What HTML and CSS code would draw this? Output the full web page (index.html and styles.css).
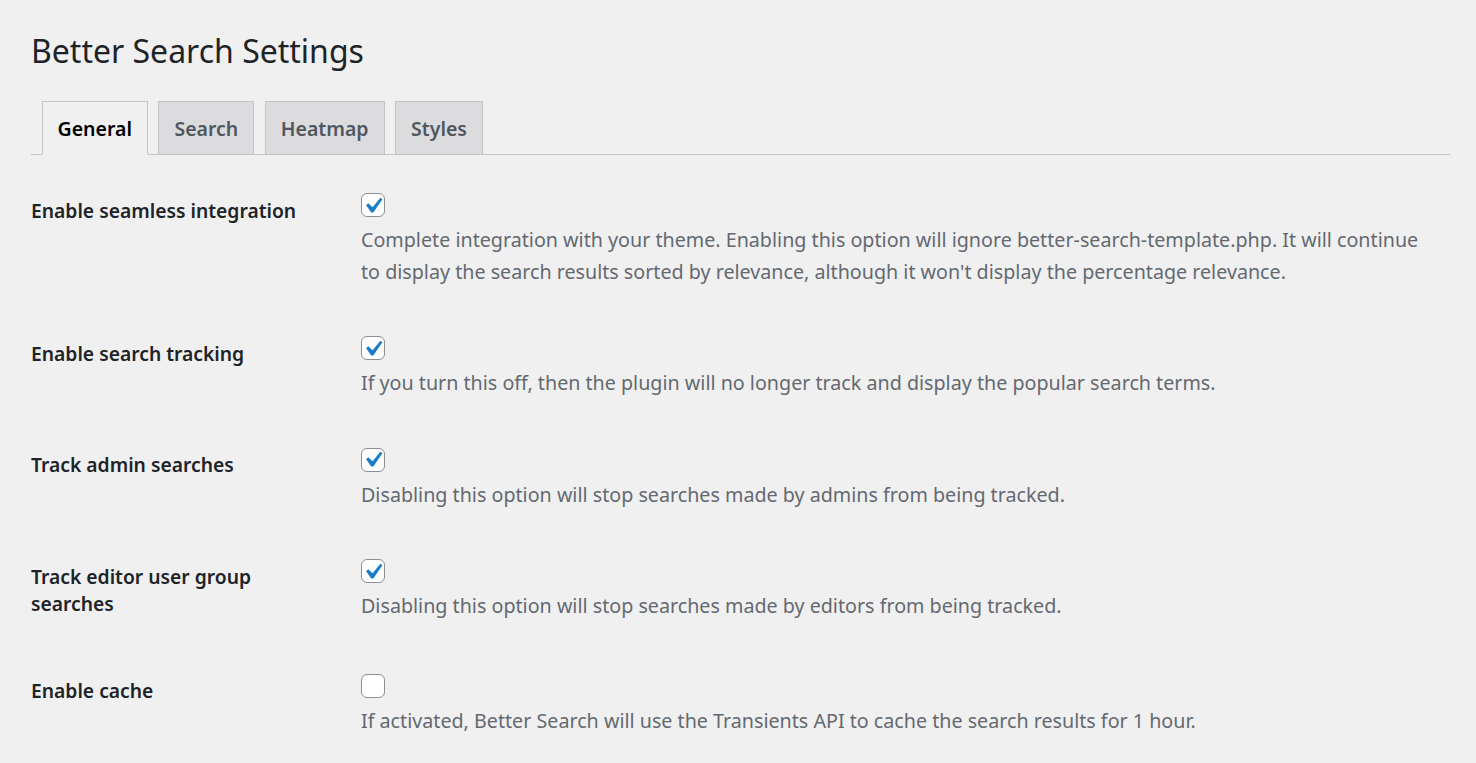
FILE: index.html
```html
<!DOCTYPE html>
<html lang="en">
<head>
    <meta charset="UTF-8">
    <meta name="viewport" content="width=device-width, initial-scale=1.0">
    <title>Better Search Settings</title>
    <link rel="stylesheet" href="styles.css">
</head>
<body>
    <div class="wrap">
        <h1>Better Search Settings</h1>

        <nav class="nav-tab-wrapper">
            <a class="nav-tab nav-tab-active" href="#general">General</a>
            <a class="nav-tab" href="#search">Search</a>
            <a class="nav-tab" href="#heatmap">Heatmap</a>
            <a class="nav-tab" href="#styles">Styles</a>
        </nav>

        <table class="form-table">
            <tbody>
                <tr>
                    <th>Enable seamless integration</th>
                    <td>
                        <span class="checkbox checked"><svg viewBox="0 0 20 20"><path d="M14.83 4.89l1.34.94-5.81 8.38H9.02L5.78 9.67l1.34-1.25 2.78 2.59z"/></svg></span>
                        <p class="description">Complete integration with your theme. Enabling this option will ignore better-search-template.php. It will continue to display the search results sorted by relevance, although it won't display the percentage relevance.</p>
                    </td>
                </tr>
                <tr>
                    <th>Enable search tracking</th>
                    <td>
                        <span class="checkbox checked"><svg viewBox="0 0 20 20"><path d="M14.83 4.89l1.34.94-5.81 8.38H9.02L5.78 9.67l1.34-1.25 2.78 2.59z"/></svg></span>
                        <p class="description">If you turn this off, then the plugin will no longer track and display the popular search terms.</p>
                    </td>
                </tr>
                <tr>
                    <th>Track admin searches</th>
                    <td>
                        <span class="checkbox checked"><svg viewBox="0 0 20 20"><path d="M14.83 4.89l1.34.94-5.81 8.38H9.02L5.78 9.67l1.34-1.25 2.78 2.59z"/></svg></span>
                        <p class="description">Disabling this option will stop searches made by admins from being tracked.</p>
                    </td>
                </tr>
                <tr>
                    <th>Track editor user group searches</th>
                    <td>
                        <span class="checkbox checked"><svg viewBox="0 0 20 20"><path d="M14.83 4.89l1.34.94-5.81 8.38H9.02L5.78 9.67l1.34-1.25 2.78 2.59z"/></svg></span>
                        <p class="description">Disabling this option will stop searches made by editors from being tracked.</p>
                    </td>
                </tr>
                <tr>
                    <th>Enable cache</th>
                    <td>
                        <span class="checkbox"></span>
                        <p class="description">If activated, Better Search will use the Transients API to cache the search results for 1 hour.</p>
                    </td>
                </tr>
            </tbody>
        </table>
    </div>
</body>
</html>
```

FILE: styles.css
```css
html, body {
    margin: 0;
    padding: 0;
    background: #f0f0f1;
}
body {
    font-family: "Noto Sans", "Open Sans", sans-serif;
    font-size: 19.7px;
    color: #3c434a;
    line-height: 31.5px;
}
.wrap {
    padding: 14px 26px 0 31px;
}
h1 {
    font-size: 32px;
    font-weight: 400;
    line-height: 45px;
    margin: 0;
    padding: 13.5px 0 6px;
    color: #1d2327;
}
.nav-tab-wrapper {
    margin-top: 22.5px;
    border-bottom: 1px solid #c3c4c7;
    display: flex;
    padding-left: 10.5px;
    gap: 10.5px;
}
.nav-tab {
    display: block;
    padding: 7.5px 15px;
    font-size: 19.5px;
    font-weight: 600;
    line-height: 37px;
    color: #50575e;
    text-decoration: none;
    background: #dcdcde;
    border: 1px solid #c3c4c7;
    border-bottom: none;
}
.nav-tab-active {
    background: #f0f0f1;
    color: #000;
    border-bottom: 1px solid #f0f0f1;
    margin-bottom: -1px;
}
.form-table {
    border-collapse: collapse;
    width: 100%;
    margin-top: 11.5px;
}
.form-table th {
    width: 300px;
    padding: 30px 15px 30px 0;
    text-align: left;
    vertical-align: top;
    font-size: 19.3px;
    font-weight: 600;
    line-height: 27.3px;
    color: #1d2327;
}
.form-table td {
    padding: 22.5px 15px;
    vertical-align: top;
}
.checkbox {
    display: block;
    box-sizing: border-box;
    width: 24px;
    height: 24px;
    margin: 4px 0 7px;
    border: 1.5px solid #8c8f94;
    border-radius: 6px;
    background: #fff;
    position: relative;
}
.checkbox svg {
    position: absolute;
    left: -5px;
    top: -4.5px;
    width: 31.5px;
    height: 31.5px;
    fill: #1a7dc6;
}
.description {
    margin: 0;
    color: #646970;
}
```
